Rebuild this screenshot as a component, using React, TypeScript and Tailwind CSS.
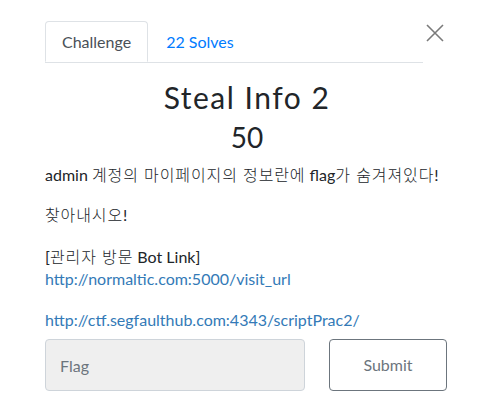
import React from 'react'

const CloseIcon = () => (
  <svg width="18" height="18" viewBox="0 0 18 18" fill="none" stroke="#7a7a7a" strokeWidth="1.6">
    <path d="M1 1 L17 17 M17 1 L1 17" />
  </svg>
)

// hangul runs: lighter and slightly wider, like the korean face in the original
const Ko = ({ children }: { children: React.ReactNode }) => (
  <span className="font-light tracking-[0.9px]">{children}</span>
)

export default function App() {
  return (
    <div className="w-[494px] h-[413px] bg-white text-[#212529] font-['Lato','Noto_Sans_CJK_KR',sans-serif]">
      {/* header: tabs + close */}
      <div className="flex items-start pt-[21px] pl-[45px]">
        <div className="flex w-[378px] border-b border-[#dee2e6]">
          <div className="-mb-px flex h-[41px] items-center rounded-t-[4px] border border-[#dee2e6] border-b-white bg-white px-[16px] text-[16px] text-[#495057]">
            Challenge
          </div>
          <div className="flex h-[41px] items-center px-[18px] text-[16px] text-[#007bff]">22 Solves</div>
        </div>
        <button className="ml-[3px] mt-[3px] p-0">
          <CloseIcon />
        </button>
      </div>

      <div className="px-[45px]">
        <h2 className="mt-[16px] text-center text-[30px] leading-[36px] tracking-[1.5px]">Steal Info 2</h2>
        <h3 className="mt-[5px] text-center text-[28px] leading-[34px]">50</h3>

        <div className="mt-[10px] text-[16px] leading-[22px]">
          <p className="mb-[18px] whitespace-nowrap">
            admin <Ko>계정의 마이페이지의 정보란에</Ko> flag<Ko>가 숨겨져있다</Ko>!
          </p>
          <p className="mb-[20px]">
            <Ko>찾아내시오</Ko>!
          </p>
          <p className="mb-[19px]">
            [<Ko>관리자 방문</Ko> Bot Link]
            <br />
            <a className="text-[#337ab7]">http://normaltic.com:5000/visit_url</a>
          </p>
          <p>
            <a className="text-[#337ab7]">http://ctf.segfaulthub.com:4343/scriptPrac2/</a>
          </p>
        </div>

        <div className="mt-[8px] flex gap-[24px]">
          <input
            placeholder="Flag"
            className="h-[52px] w-[260px] rounded-[4px] border border-[#ced4da] bg-[#efefef] px-[14px] text-[16px] placeholder:text-[#6c757d] outline-none"
          />
          <button className="h-[52px] w-[118px] rounded-[4px] border border-[#6c757d] bg-white text-[16px] text-[#6c757d]">
            Submit
          </button>
        </div>
      </div>
    </div>
  )
}
